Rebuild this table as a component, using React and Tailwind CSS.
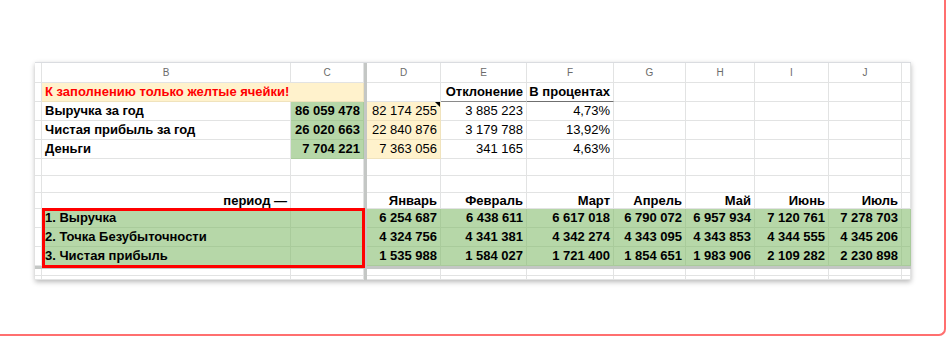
import clsx from 'clsx';

const GRID = 'grid grid-cols-[7px_249px_73px_3px_74px_86px_87px_72px_69px_74px_73px_9px]';

const ALIGN = {
  left: 'justify-start',
  center: 'justify-center',
  right: 'justify-end',
};

function Cell({ children, className = '', align = 'right' }) {
  return (
    <div
      className={clsx(
        'relative flex items-center whitespace-nowrap overflow-hidden border-r border-b px-[3px]',
        ALIGN[align],
        className
      )}
    >
      {children}
    </div>
  );
}

const plain = 'border-[#e2e3e3]';
const green = 'bg-[#b6d7a8] border-[#a9cb9b]';
const yellow = 'bg-[#fff2cc] border-[#f0e3bd]';

const Num = () => <Cell className={plain} />;
const Blank = () => <Cell className={plain} />;
const Split = () => <div className="bg-[#c4c7c5]" />;

const months = ['Январь', 'Февраль', 'Март', 'Апрель', 'Май', 'Июнь', 'Июль'];

const greenRows = [
  ['1. Выручка', ['6 254 687', '6 438 611', '6 617 018', '6 790 072', '6 957 934', '7 120 761', '7 278 703']],
  ['2. Точка Безубыточности', ['4 324 756', '4 341 381', '4 342 274', '4 343 095', '4 343 853', '4 344 555', '4 345 206']],
  ['3. Чистая прибыль', ['1 535 988', '1 584 027', '1 721 400', '1 854 651', '1 983 906', '2 109 282', '2 230 898']],
];

const totals = [
  ['Выручка за год', '86 059 478', '82 174 255', '3 885 223', '4,73%'],
  ['Чистая прибыль за год', '26 020 663', '22 840 876', '3 179 788', '13,92%'],
  ['Деньги', '7 704 221', '7 363 056', '341 165', '4,63%'],
];

function EmptyRow({ h }) {
  return (
    <div className={clsx(GRID, h)}>
      <Num />
      <Blank />
      <Blank />
      <Split />
      <Blank />
      <Blank />
      <Blank />
      <Blank />
      <Blank />
      <Blank />
      <Blank />
      <Blank />
    </div>
  );
}

export default function App() {
  return (
    <div className="w-[950px] h-[340px] bg-white font-['Liberation_Sans',Arial,sans-serif] text-[13px] text-black">
      <div className="w-[946px] h-[336px] bg-white border-r-2 border-b-2 border-[#ff6f6f] rounded-br-[7px] pt-[62px] pl-[35px]">
        <div className="w-[876px] border-t border-[#dadce0] shadow-[0_2px_5px_rgba(0,0,0,0.28)]">
          {/* column letters */}
          <div className={clsx(GRID, 'h-[20px] text-[10px] text-[#6b6b6b]')}>
            <Num />
            {['B', 'C'].map((l) => (
              <Cell key={l} align="center" className={plain}>{l}</Cell>
            ))}
            <Split />
            {['D', 'E', 'F', 'G', 'H', 'I', 'J'].map((l) => (
              <Cell key={l} align="center" className={plain}>{l}</Cell>
            ))}
            <Blank />
          </div>

          {/* hint row */}
          <div className={clsx(GRID, 'h-[19px]')}>
            <Num />
            <Cell align="left" className={clsx('col-span-2 font-bold text-[#ff0000]', yellow)}>
              К заполнению только желтые ячейки!
            </Cell>
            <Split />
            <Blank />
            <Cell className="font-bold border-r-[#e2e3e3] border-b-[#8a8a8a]">Отклонение</Cell>
            <Cell className="font-bold border-r-[#e2e3e3] border-b-[#6f6f6f]">В процентах</Cell>
            <Blank />
            <Blank />
            <Blank />
            <Blank />
            <Blank />
          </div>

          {totals.map(([name, plan, fact, diff, pct], i) => (
            <div key={name} className={clsx(GRID, 'h-[19px]')}>
              <Num />
              <Cell align="left" className={clsx('font-bold', plain)}>{name}</Cell>
              <Cell className={clsx('font-bold', green)}>{plan}</Cell>
              <Split />
              <Cell className={yellow}>
                {fact}
                {i === 0 && (
                  <span className="absolute top-0 right-0 w-0 h-0 border-t-[5px] border-l-[5px] border-t-black border-l-transparent" />
                )}
              </Cell>
              <Cell className={plain}>{diff}</Cell>
              <Cell className={plain}>{pct}</Cell>
              <Blank />
              <Blank />
              <Blank />
              <Blank />
              <Blank />
            </div>
          ))}

          <EmptyRow h="h-[17px]" />
          <EmptyRow h="h-[17px]" />

          {/* months */}
          <div className={clsx(GRID, 'h-[16px] font-bold')}>
            <Num />
            <Cell className={plain}>период —</Cell>
            <Blank />
            <Split />
            {months.map((m) => (
              <Cell key={m} className={plain}>{m}</Cell>
            ))}
            <Blank />
          </div>

          {/* green block with red frame over B:C */}
          <div className="relative">
            {greenRows.map(([name, vals]) => (
              <div key={name} className={clsx(GRID, 'h-[19px] font-bold')}>
                <Num />
                <Cell align="left" className={green}>{name}</Cell>
                <Cell className={green} />
                <Split />
                {vals.map((v, j) => (
                  <Cell key={j} className={green}>{v}</Cell>
                ))}
                <Cell className={green} />
              </div>
            ))}
            <div className="absolute left-[7px] top-[-1px] w-[323px] h-[60px] border-[3px] border-[#ff0000]" />
          </div>

          <div className="h-[3px] bg-[#c4c7c5]" />
          <EmptyRow h="h-[7px]" />
          <EmptyRow h="h-[4px]" />
        </div>
      </div>
    </div>
  );
}
